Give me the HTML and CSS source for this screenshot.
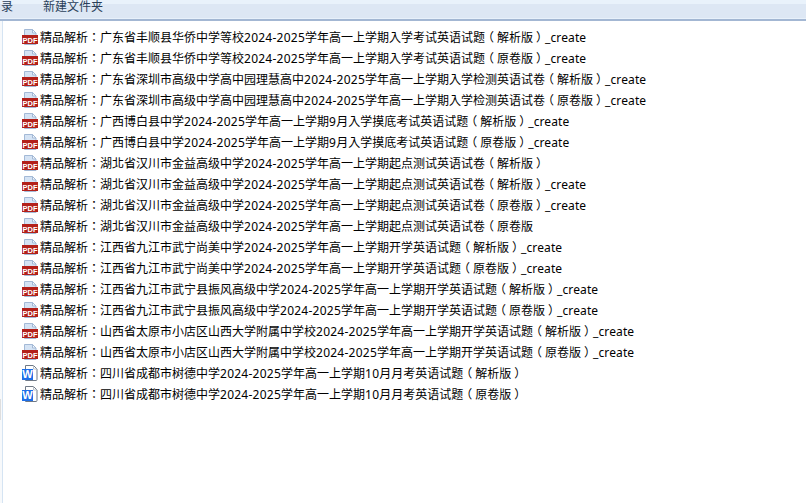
FILE: index.html
```html
<!DOCTYPE html>
<html lang="zh-TW">
<head>
<meta charset="utf-8">
<title>文件列表</title>
<link rel="stylesheet" href="styles.css">
</head>
<body>
<svg class="defs" width="0" height="0" aria-hidden="true">
  <symbol id="pdf" viewBox="0 0 16 16">
    <path d="M2.500.5h8l3.500 3.500v11.500h-11.500z" fill="#d5e3f4" stroke="#a3b9d6"/>
    <path d="M10.500.5v3.500h3.500z" fill="#f4f8fc" stroke="#a3b9d6"/>
    <rect x="0" y="6" width="16" height="9" fill="#b3201a"/>
    <text x="8" y="13.500" class="pdf-label">PDF</text>
  </symbol>
  <symbol id="word" viewBox="0 0 16 16">
    <path d="M3.500.5h8l3.500 3.500v10.500a1 1 0 0 1-1 1h-10.500z" fill="#fff" stroke="#6f7986"/>
    <path d="M11.500.5v3.500h3.500" fill="none" stroke="#b9c0c8"/>
    <rect x="0" y="4" width="11" height="11" fill="#1f6fe8"/>
    <text x="5.500" y="13" class="word-label">W</text>
  </symbol>
</svg>
<header class="toolbar">
  <span class="tool tool-first">录</span>
  <span class="tool">新建文件夹</span>
</header>
<div class="content">
<main class="list">
  <div class="row"><svg class="icon"><use href="#pdf"/></svg><span>精品解析：广东省丰顺县华侨中学等校<b>2024-2025</b>学年高一上学期入学考试英语试题<i>（</i>解析版<i>）</i><b>_create</b></span></div>
  <div class="row"><svg class="icon"><use href="#pdf"/></svg><span>精品解析：广东省丰顺县华侨中学等校<b>2024-2025</b>学年高一上学期入学考试英语试题<i>（</i>原卷版<i>）</i><b>_create</b></span></div>
  <div class="row"><svg class="icon"><use href="#pdf"/></svg><span>精品解析：广东省深圳市高级中学高中园理慧高中<b>2024-2025</b>学年高一上学期入学检测英语试卷<i>（</i>解析版<i>）</i><b>_create</b></span></div>
  <div class="row"><svg class="icon"><use href="#pdf"/></svg><span>精品解析：广东省深圳市高级中学高中园理慧高中<b>2024-2025</b>学年高一上学期入学检测英语试卷<i>（</i>原卷版<i>）</i><b>_create</b></span></div>
  <div class="row"><svg class="icon"><use href="#pdf"/></svg><span>精品解析：广西博白县中学<b>2024-2025</b>学年高一上学期<b>9</b>月入学摸底考试英语试题<i>（</i>解析版<i>）</i><b>_create</b></span></div>
  <div class="row"><svg class="icon"><use href="#pdf"/></svg><span>精品解析：广西博白县中学<b>2024-2025</b>学年高一上学期<b>9</b>月入学摸底考试英语试题<i>（</i>原卷版<i>）</i><b>_create</b></span></div>
  <div class="row"><svg class="icon"><use href="#pdf"/></svg><span>精品解析：湖北省汉川市金益高级中学<b>2024-2025</b>学年高一上学期起点测试英语试卷<i>（</i>解析版<i>）</i></span></div>
  <div class="row"><svg class="icon"><use href="#pdf"/></svg><span>精品解析：湖北省汉川市金益高级中学<b>2024-2025</b>学年高一上学期起点测试英语试卷<i>（</i>解析版<i>）</i><b>_create</b></span></div>
  <div class="row"><svg class="icon"><use href="#pdf"/></svg><span>精品解析：湖北省汉川市金益高级中学<b>2024-2025</b>学年高一上学期起点测试英语试卷<i>（</i>原卷版<i>）</i><b>_create</b></span></div>
  <div class="row"><svg class="icon"><use href="#pdf"/></svg><span>精品解析：湖北省汉川市金益高级中学<b>2024-2025</b>学年高一上学期起点测试英语试卷<i>（</i>原卷版</span></div>
  <div class="row"><svg class="icon"><use href="#pdf"/></svg><span>精品解析：江西省九江市武宁尚美中学<b>2024-2025</b>学年高一上学期开学英语试题<i>（</i>解析版<i>）</i><b>_create</b></span></div>
  <div class="row"><svg class="icon"><use href="#pdf"/></svg><span>精品解析：江西省九江市武宁尚美中学<b>2024-2025</b>学年高一上学期开学英语试题<i>（</i>原卷版<i>）</i><b>_create</b></span></div>
  <div class="row"><svg class="icon"><use href="#pdf"/></svg><span>精品解析：江西省九江市武宁县振风高级中学<b>2024-2025</b>学年高一上学期开学英语试题<i>（</i>解析版<i>）</i><b>_create</b></span></div>
  <div class="row"><svg class="icon"><use href="#pdf"/></svg><span>精品解析：江西省九江市武宁县振风高级中学<b>2024-2025</b>学年高一上学期开学英语试题<i>（</i>原卷版<i>）</i><b>_create</b></span></div>
  <div class="row"><svg class="icon"><use href="#pdf"/></svg><span>精品解析：山西省太原市小店区山西大学附属中学校<b>2024-2025</b>学年高一上学期开学英语试题<i>（</i>解析版<i>）</i><b>_create</b></span></div>
  <div class="row"><svg class="icon"><use href="#pdf"/></svg><span>精品解析：山西省太原市小店区山西大学附属中学校<b>2024-2025</b>学年高一上学期开学英语试题<i>（</i>原卷版<i>）</i><b>_create</b></span></div>
  <div class="row"><svg class="icon"><use href="#word"/></svg><span>精品解析：四川省成都市树德中学<b>2024-2025</b>学年高一上学期<b>10</b>月月考英语试题<i>（</i>解析版<i>）</i></span></div>
  <div class="row"><svg class="icon"><use href="#word"/></svg><span>精品解析：四川省成都市树德中学<b>2024-2025</b>学年高一上学期<b>10</b>月月考英语试题<i>（</i>原卷版<i>）</i></span></div>
</main>
</div>
</body>
</html>
```
FILE: styles.css
```css
* { box-sizing: border-box; }
html, body { margin: 0; height: 100%; }
body {
  width: 806px;
  height: 503px;
  overflow: hidden;
  background: #fff;
  font-family: "Noto Sans", "Noto Sans CJK TC", sans-serif;
  font-size: 12px;
  color: #000;
  display: flex;
  flex-direction: column;
}
.defs { position: absolute; }
.pdf-label {
  font: bold 7.500px "Liberation Sans", sans-serif;
  fill: #fff;
  text-anchor: middle;
}
.word-label {
  font: bold 11px "Liberation Sans", sans-serif;
  fill: #fff;
  text-anchor: middle;
}
.toolbar {
  height: 21px;
  flex: none;
  display: flex;
  align-items: flex-start;
  gap: 30px;
  line-height: 13px;
  color: #2a3f5a;
  background: linear-gradient(#e9f2fb 0 4px, #dde7f4 4px 18px, #e8f1fb 18px);
  border-bottom: 2px solid #a3b7d3;
  overflow: hidden;
}
.tool-first { margin-left: 1px; }
.content {
  flex: 1;
  position: relative;
  display: flex;
  padding-left: 2px;
  background: #f7f9fb;
}
.content::before {
  content: "";
  position: absolute;
  left: 0;
  top: 378px;
  width: 1px;
  height: 21px;
  background: #dedede;
}
.list {
  flex: 1;
  padding-top: 6px;
  background: #fff;
  border-left: 1px solid #d5e4f3;
  display: flex;
  flex-direction: column;
}
.row {
  height: 21px;
  display: flex;
  align-items: center;
  padding-left: 19px;
  gap: 2px;
  white-space: nowrap;
  line-height: 18px;
}
.row span { margin-top: 1px; }
.row b {
  font-weight: normal;
  letter-spacing: .25px;
}
.row b:last-child { letter-spacing: .1px; }
.row i {
  display: inline-block;
  width: 12px;
  text-align: center;
  font-style: normal;
  font-feature-settings: "halt";
}
.icon { width: 16px; height: 16px; flex: none; margin-top: -1px; }
```
